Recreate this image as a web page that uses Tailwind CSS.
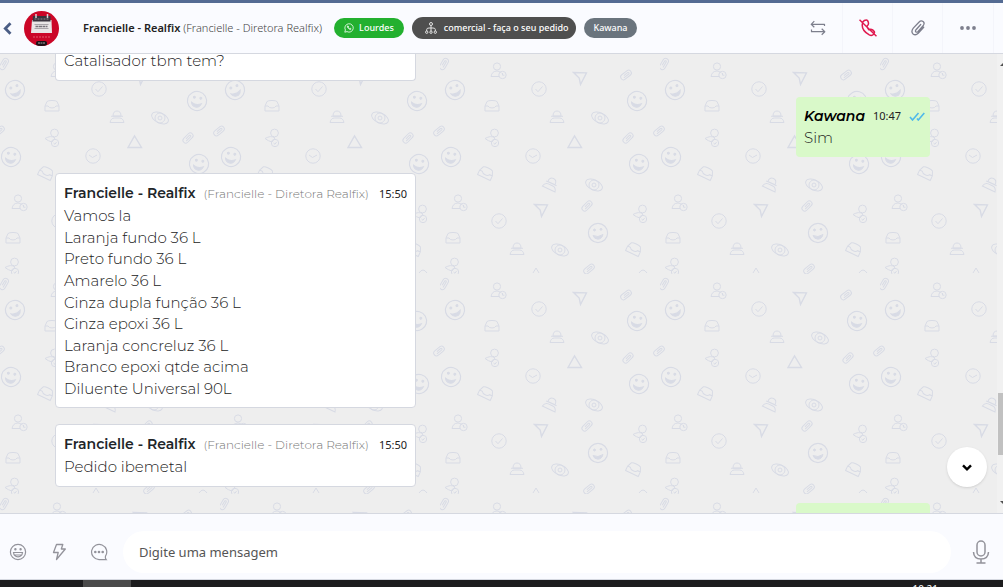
<!DOCTYPE html>
<html lang="pt-BR">
<head>
<meta charset="utf-8">
<meta name="viewport" content="width=device-width, initial-scale=1">
<title>Francielle - Realfix</title>
<script src="https://cdn.jsdelivr.net/npm/@tailwindcss/browser@4"></script>
</head>
<body class="flex h-screen flex-col overflow-hidden bg-[#fafbff] font-['Segoe_UI','Noto_Sans',sans-serif] text-[#212529]">

<header class="flex h-[54px] shrink-0 items-center border-t-3 border-b border-t-[#546b93] border-b-[#d5d8e0] bg-[#fafbff]">
  <button aria-label="Voltar" class="ml-[3px] flex w-[9px] justify-center">
    <svg class="h-[13px] w-[9px]" viewBox="0 0 9 13" fill="none" stroke="#4a5d85" stroke-width="2.8"><path d="M7.5 1.2 2.3 6.5l5.2 5.3"/></svg>
  </button>
  <svg class="ml-3 size-[35px] shrink-0" viewBox="0 0 35 35" role="img" aria-label="Realfix">
    <clipPath id="avatar"><circle cx="17.500" cy="17.500" r="17.500"/></clipPath>
    <g clip-path="url(#avatar)">
      <path fill="#cb0627" d="M0 0h35v35H0z"/>
      <path fill="#e9e6e6" d="M8 9h19.500l.5 13H7z"/>
      <path fill="#39343d" d="M9 5h17.500v5.500H8.500z"/>
      <path stroke="#d8d5d8" stroke-width="1.500" d="M12 3v4M23.500 3v4"/>
      <path stroke="#8d8990" stroke-dasharray="2 1" d="M10.500 8h14"/>
      <path stroke="#aaa6aa" stroke-width="1" d="M10.500 13.500h14M10.500 17.500h14"/>
      <path stroke="#77737a" stroke-width="1.500" stroke-dasharray="3 .5" d="M11.500 15.500h12"/>
      <path stroke="#e3596d" stroke-dasharray="2 1" d="M9 26h17"/>
      <rect x="12" y="30" width="11" height="5" rx="2" fill="#1b1216"/>
      <path stroke="#a9a3a6" stroke-dasharray="2 .5" d="M14 32h7"/>
    </g>
  </svg>
  <h1 class="ml-6 whitespace-nowrap text-[11px] leading-5"><span class="font-semibold text-[#222]">Francielle - Realfix</span> <span class="font-light text-[#444]">(Francielle - Diretora Realfix)</span></h1>
  <div class="ml-3 flex items-center gap-2 text-[9px] font-medium whitespace-nowrap text-white">
    <span class="flex h-5 items-center gap-[5px] rounded-full bg-[#23b02f] px-[10px]">
      <svg class="size-[10px]" viewBox="0 0 10 10" fill="none" stroke="#e3f8e4" stroke-width=".9"><path d="m.8 9.200.6-2.200A4.200 4.200 0 1 1 3 8.600zM3.400 3c-.5.900 1.700 3.800 3.300 3.500.6-.4.400-.8.100-1l-.9-.3-.4.500c-.5-.2-1-.7-1.200-1.200l.4-.5L4.200 3z"/></svg>
      Lourdes
    </span>
    <span class="flex h-[22px] items-center gap-[7px] rounded-full bg-[#4f4f4f] pr-2 pl-[13px]">
      <svg class="h-3 w-3" viewBox="0 0 12 12" fill="none" stroke="#f1f1f1" stroke-width=".9"><circle cx="6" cy="2" r="1.500"/><path d="M6 3.500V9M1.700 9V7.500Q1.700 6 4 6h4q2.300 0 2.300 1.500V9"/><circle cx="1.700" cy="10.200" r="1.200"/><circle cx="6" cy="10.200" r="1.200"/><circle cx="10.300" cy="10.200" r="1.200"/></svg>
      comercial - faça o seu pedido
    </span>
    <span class="flex h-5 items-center rounded-full bg-[#6a747d] px-[9px]">Kawana</span>
  </div>
  <nav class="mr-[9px] ml-auto flex h-full divide-x divide-[#f4f5fb] border-r border-[#f4f5fb]">
    <button aria-label="Transferir" class="flex w-[50px] items-center justify-center">
      <svg class="size-4" viewBox="0 0 16 16" fill="none" stroke="#7d7f8d" stroke-width="1.200" stroke-linejoin="round"><path d="M14.500 6V4.300H1.500M4.300 1.200 1.200 4.300l3.100 3M1.500 9.500v2.200h13M11.700 8.700l3.100 3-3.100 3"/></svg>
    </button>
    <button aria-label="Encerrar" class="flex w-[50px] items-center justify-center">
      <svg class="size-[18px]" viewBox="0 0 18 18" fill="none" stroke="#e0194f" stroke-width="1.500" stroke-linejoin="round"><path d="M5.300 1.500Q7.500.300 8.500 1.500q1.700 2.500.5 4.500Q7.700 7 8.200 8.300l1.700 2.400q2-.9 3.700.2l1.700 1.700q.7 1.700-1.500 3.300-1.500 1-3.500 0Q2.500 11.500 3.300 5.200 3.800 2.300 5.300 1.500zM.5.800l17 16.400"/></svg>
    </button>
    <button aria-label="Anexar" class="flex w-[50px] items-center justify-center">
      <svg class="size-4" viewBox="0 0 16 16" fill="none" stroke="#7d7f8d" stroke-width="1.300" stroke-linecap="round"><path d="M10.700 4.500 5.800 10q-.9 1.500.3 2.100 1 .4 2-.6l5-5.700q2-2.700 0-4.300-2.100-1.400-4.200.7L3.300 8.100Q.7 11.500 3 13.900q2.500 2 5.200-.6l5.500-6.100"/></svg>
    </button>
    <button aria-label="Mais opções" class="flex w-[50px] items-center justify-center">
      <svg class="h-1 w-4" viewBox="0 0 16 4" fill="#7d7f8d"><circle cx="2" cy="2" r="1.900"/><circle cx="8" cy="2" r="1.900"/><circle cx="14" cy="2" r="1.900"/></svg>
    </button>
  </nav>
</header>

<main class="relative flex min-h-0 flex-1 overflow-hidden bg-[#eeeeee]">
  <svg class="absolute inset-0 h-full w-full" aria-hidden="true">
    <defs>
      <g id="smile"><circle r="9.600" stroke-width="1.200"/><path fill="#d8dbe5" d="M-5 2.500Q0 5 5 1.500 4 6 0 6.200-4 6-5 2.500z"/><circle cx="-3.500" cy="-3" r="1" fill="#d8dbe5"/><circle cx="3" cy="-3.700" r="1" fill="#d8dbe5"/></g>
      <g id="check"><circle r="7.200"/><path d="m-3.500 0 2.500 2.700L3.500-2.500"/></g>
      <g id="nod"><circle r="7.200"/><path d="m-4-1 3.500 2.500L4-1"/></g>
      <g id="clip"><rect x="-6" y="-2.800" width="12" height="5.600" rx="2.800"/><path d="M-3.500.9h6.500q1.500-.9 0-1.800h-5"/></g>
      <g id="user"><circle cx="-1" cy="-4.500" r="3.600"/><path d="M-7 5.500Q-6 0-1 0q3 0 4.500 2M-7 5.500h8"/><circle cx="4.500" cy="4" r="3.700"/><path d="M4.500 2v2.200h2"/></g>
      <g id="share"><circle cx="1.500" cy="-5" r="3.900"/><path d="M-8 .5Q-2-3 2 0L-1 4q-4-1-7-3.500z"/><circle cx="2" cy="5" r="3.700"/><path d="m.5 5 1.500 1.300L3.500 4"/></g>
      <g id="inbox"><path d="M-7 0-5-4.500Q-4-5.500 0-5.500T5-4.500L7 0v5H-7zM-7 0h3q1 2 4 2t4-2h3"/></g>
      <g id="hat"><path d="M-4-1q0-5 4-5t4 5zM-7 5.500Q-6 1-2.500 1h5Q6 1 7 5.500zM-6-.7H6"/></g>
      <g id="eye"><ellipse rx="9" ry="5" transform="rotate(25)"/><circle r="5"/><circle r="2"/></g>
      <path id="plane" d="m-6.500-5.500 13 .3L.5 6.500-.8 0z" stroke-width="1.400"/>
      <pattern id="doodles" width="220" height="220" patternUnits="userSpaceOnUse">
        <g fill="none" stroke="#d8dbe5" stroke-width="1">
          <use href="#clip" transform="translate(4 10) rotate(-60)"/>
          <use href="#user" x="58" y="17"/>
          <use href="#plane" x="140" y="24"/>
          <use href="#clip" transform="translate(186 21) rotate(-38)"/>
          <use href="#smile" transform="translate(15 36) rotate(-15)"/>
          <use href="#check" x="99" y="35"/>
          <use href="#smile" transform="translate(197 47) rotate(15)"/>
          <use href="#inbox" x="52" y="52"/>
          <use href="#hat" x="117" y="63"/>
          <use href="#eye" x="160" y="64"/>
          <use href="#clip" transform="translate(-1 77) rotate(-40)"/>
          <use href="#clip" transform="translate(219 77) rotate(-40)"/>
          <use href="#share" x="53" y="84"/>
          <path d="M128 93.500 134.500 82l7 11.500z" stroke-width="1.400"/>
          <use href="#clip" transform="translate(188 84) rotate(-45)"/>
          <use href="#smile" transform="translate(11 103) rotate(15)"/>
          <use href="#nod" x="93" y="102"/>
          <use href="#smile" transform="translate(199 110) rotate(15)"/>
          <use href="#inbox" transform="translate(46 119) rotate(25)"/>
          <use href="#hat" transform="translate(111 130) rotate(25)"/>
          <use href="#eye" x="154" y="131"/>
          <use href="#user" x="19" y="149"/>
          <use href="#plane" x="101" y="156"/>
          <use href="#clip" transform="translate(147 152) rotate(-45)"/>
          <use href="#share" x="201" y="160"/>
          <use href="#check" x="59" y="167"/>
          <use href="#smile" x="158" y="179"/>
          <use href="#inbox" x="13" y="184"/>
          <use href="#hat" x="77" y="195"/>
          <use href="#eye" x="120" y="196"/>
          <use href="#inbox" transform="translate(194 195) rotate(25)"/>
          <use href="#share" x="13" y="213"/>
          <path d="M199 219q4-6 8 0M93 219l3-5 3 5"/>
          <use href="#clip" transform="translate(149 215) rotate(-40)"/>
        </g>
      </pattern>
    </defs>
    <rect width="100%" height="100%" fill="url(#doodles)"/>
  </svg>

  <section aria-label="Mensagens" class="relative -mt-1 flex flex-1 flex-col gap-4 overflow-hidden pr-[67px] pl-[55px] font-['Montserrat','Inter',sans-serif] text-[15px] leading-[22px] font-light text-[#222]">
    <article class="w-[361px] shrink-0 self-start rounded-b border border-t-0 border-[#d5d8e0] bg-white px-2 pb-2">
      <p>Catalisador tbm tem?</p>
    </article>
    <article class="w-[134px] shrink-0 self-end rounded-sm bg-[#d9f9c9] p-2">
      <p class="flex items-center gap-2"><strong class="text-[14px] font-semibold text-black italic">Kawana</strong> <time class="font-['Segoe_UI','Noto_Sans',sans-serif] text-[11px] font-normal">10:47</time>
        <svg class="h-[9px] w-4 shrink-0" viewBox="0 0 16 9" fill="none" stroke="#4fb9ea" stroke-width="1.600" role="img" aria-label="Lida"><path d="m1 5 2.500 3L9.500 1M8 6.500 9.300 8l6-7"/></svg></p>
      <p>Sim</p>
    </article>
    <article class="w-[361px] shrink-0 self-start rounded border border-[#d5d8e0] bg-white p-2">
      <p class="flex items-baseline whitespace-nowrap"><strong class="text-[14px] font-semibold text-[#212529]">Francielle - Realfix</strong> <span class="ml-2 text-[12px] text-[#777]">(Francielle - Diretora Realfix)</span> <time class="ml-auto font-['Segoe_UI','Noto_Sans',sans-serif] text-[11px] font-normal">15:50</time></p>
      <div class="flex min-h-[194px] flex-col justify-between leading-[21px]">
        <p>Vamos la</p>
        <p>Laranja fundo 36 L</p>
        <p>Preto fundo 36 L</p>
        <p>Amarelo 36 L</p>
        <p>Cinza dupla função 36 L</p>
        <p>Cinza epoxi 36 L</p>
        <p>Laranja concreluz 36 L</p>
        <p>Branco epoxi qtde acima</p>
        <p>Diluente Universal 90L</p>
      </div>
    </article>
    <article class="w-[361px] shrink-0 self-start rounded border border-[#d5d8e0] bg-white p-2">
      <p class="flex items-baseline whitespace-nowrap"><strong class="text-[14px] font-semibold text-[#212529]">Francielle - Realfix</strong> <span class="ml-2 text-[12px] text-[#777]">(Francielle - Diretora Realfix)</span> <time class="ml-auto font-['Segoe_UI','Noto_Sans',sans-serif] text-[11px] font-normal">15:50</time></p>
      <p>Pedido ibemetal</p>
    </article>
    <article class="h-[60px] w-[134px] shrink-0 self-end rounded-sm bg-[#d9f9c9]"></article>
  </section>

  <div class="relative flex w-[6px] shrink-0 flex-col items-end bg-[#f1f1f1]" aria-hidden="true">
    <svg class="mt-2 h-1 w-[3px]" viewBox="0 0 3 4"><path fill="#505050" d="M0 4 3 1v3z"/></svg>
    <div class="mt-auto mb-[46px] h-[62px] w-[5px] bg-[#c1c1c1]"></div>
    <svg class="mb-2 h-1 w-[3px]" viewBox="0 0 3 4"><path fill="#505050" d="M0 0h3v3z"/></svg>
  </div>
  <button aria-label="Ir para o fim" class="absolute right-4 bottom-[26px] flex size-10 items-center justify-center rounded-full bg-white shadow-sm">
    <svg class="h-[7px] w-[10px]" viewBox="0 0 10 7" fill="none" stroke="#000" stroke-width="2.400"><path d="m1 1.300 4 4 4-4"/></svg>
  </button>
</main>

<footer class="flex h-[67px] shrink-0 items-center border-t border-b border-[#d5d8e0] bg-[#fafbff] pt-[10px]">
  <button aria-label="Emojis" class="ml-[9px]">
    <svg class="size-[18px]" viewBox="0 0 18 18" fill="none" stroke="#93939b" stroke-width="1.200"><circle cx="9" cy="9" r="7.600"/><path d="M4.500 9.500h9q-.5 4.300-4.500 4.300t-4.500-4.300zM5.700 12h6.600"/><circle cx="6.400" cy="6.300" r=".6" fill="#93939b"/><circle cx="11.600" cy="6.300" r=".6" fill="#93939b"/></svg>
  </button>
  <button aria-label="Respostas rápidas" class="ml-6">
    <svg class="h-[18px] w-4" viewBox="0 0 16 18" fill="none" stroke="#93939b" stroke-width="1.300" stroke-linejoin="round"><path d="M5.500 1.500h6.300L10.300 6h4L5.500 16.500l1.700-7H2.500z"/></svg>
  </button>
  <button aria-label="Mensagens prontas" class="ml-[23px]">
    <svg class="size-[18px]" viewBox="0 0 18 18" fill="none" stroke="#93939b" stroke-width="1.200"><path d="M15.500 13.200A7.600 7.600 0 1 0 9 16.600h7.200q-1.200-1.400-.7-3.400z"/><g fill="#93939b" stroke="none"><circle cx="5.300" cy="9" r="1.300"/><circle cx="9" cy="9" r="1.300"/><circle cx="12.700" cy="9" r="1.300"/></g></svg>
  </button>
  <input type="text" aria-label="Mensagem" placeholder="Digite uma mensagem" class="ml-[15px] h-[42px] min-w-0 flex-1 rounded-full bg-white px-4 text-[13px] text-[#444] outline-none placeholder:text-[#555]">
  <button aria-label="Gravar áudio" class="mr-[13px] ml-[21px]">
    <svg class="h-6 w-[18px]" viewBox="0 0 18 24" fill="none" stroke="#93939b" stroke-width="1.500"><rect x="5" y="1" width="8" height="15" rx="4"/><path d="M1.500 12q.3 7 7.500 7t7.500-7M9 19v3.500M4.500 23h9"/></svg>
  </button>
</footer>
<div class="flex h-[7px] shrink-0 items-start overflow-hidden bg-[#1c1c1e] pl-[83px] text-[10px] text-white">
  <div class="h-full w-12 bg-[#4a4a4a]"></div>
  <time class="mr-[65px] ml-auto pt-[2px]">10:21</time>
</div>
</body>
</html>
